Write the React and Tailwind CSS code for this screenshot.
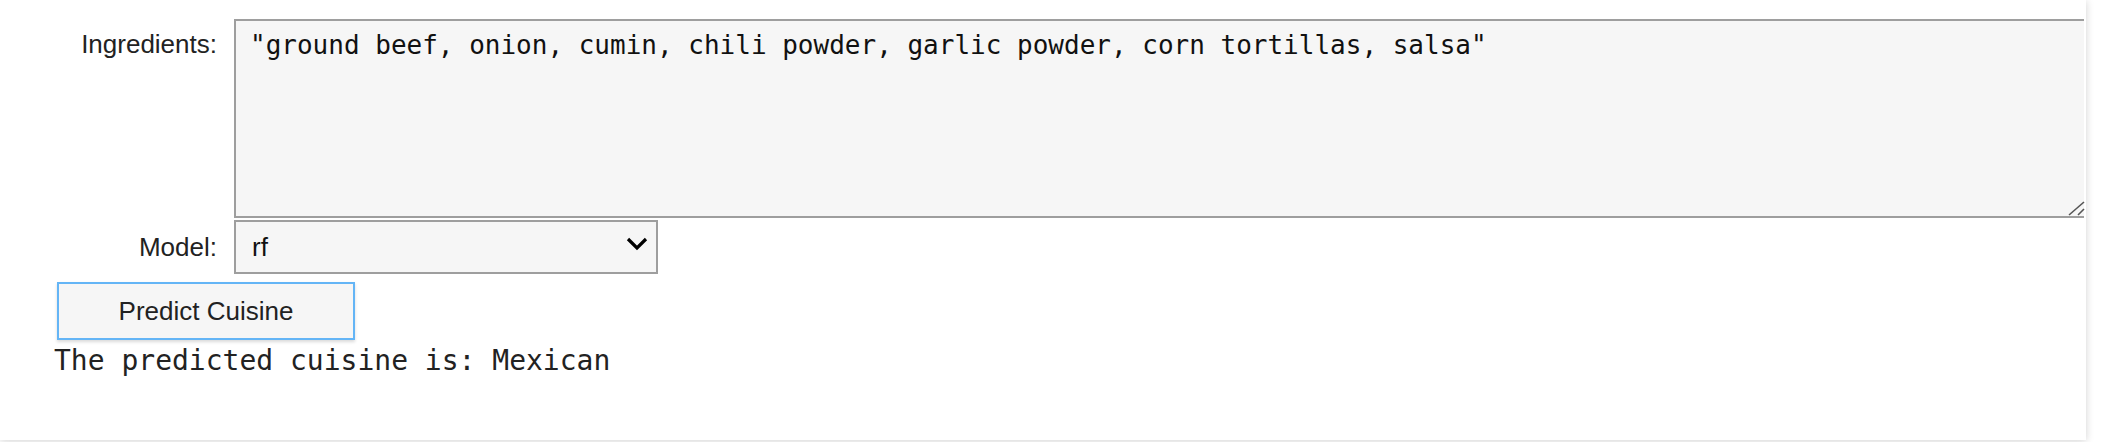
import React from 'react';

const ingredients = '"ground beef, onion, cumin, chili powder, garlic powder, corn tortillas, salsa"';

const Label = ({ children, className = '' }) => (
  <div
    className={`w-[160px] shrink-0 text-right text-[26px] leading-normal text-[#222] font-['Liberation_Sans',Arial,sans-serif] ${className}`}
  >
    {children}
  </div>
);

const Chevron = () => (
  <svg width="22" height="14" viewBox="0 0 22 14" className="block">
    <polyline points="2,2 11,11 20,2" fill="none" stroke="#000" strokeWidth="3.2" />
  </svg>
);

export default function App() {
  return (
    <div className="w-[2118px] h-[442px] bg-white overflow-hidden">
      <div className="relative w-[2086px] h-[440px] bg-white shadow-[0_1px_8px_rgba(0,0,0,0.18)]">
        <div className="w-[2084px] h-full overflow-hidden pt-[19px] pl-[57px]">
          {/* ingredients */}
          <div className="flex items-start">
            <Label className="pt-[6px]">Ingredients:</Label>
            <textarea
              readOnly
              value={ingredients}
              className="ml-[17px] w-[1900px] h-[199px] shrink-0 resize-none border-2 border-[#9e9e9e] bg-[#f6f6f6] pt-[5px] pl-[14px] text-[26px] leading-normal text-[#111] outline-none font-['DejaVu_Sans_Mono',monospace]"
            />
          </div>

          {/* model */}
          <div className="mt-[2px] flex items-center">
            <Label>Model:</Label>
            <div className="relative ml-[17px] w-[424px] h-[54px]">
              <select
                defaultValue="rf"
                className="w-full h-full appearance-none border-2 border-[#9e9e9e] bg-[#f6f6f6] pl-[16px] text-[26px] text-[#111] outline-none font-['Liberation_Sans',Arial,sans-serif]"
              >
                <option value="rf">rf</option>
              </select>
              <div className="pointer-events-none absolute right-[10px] top-[17px]">
                <Chevron />
              </div>
            </div>
          </div>

          <button className="mt-[8px] flex w-[298px] h-[58px] items-center justify-center border-2 border-[#64b5f6] bg-[#f6f6f6] text-[26px] text-[#222] shadow-[0_2px_3px_rgba(0,0,0,0.15)] font-['Liberation_Sans',Arial,sans-serif]">
            Predict Cuisine
          </button>

          <div className="-ml-[3px] mt-0 text-[28px] leading-normal text-[#222] whitespace-pre font-['DejaVu_Sans_Mono',monospace]">
            The predicted cuisine is: Mexican
          </div>
        </div>

        {/* textarea resize grip */}
        <svg
          width="20"
          height="20"
          viewBox="0 0 20 20"
          className="pointer-events-none absolute left-[2066px] top-[199px]"
        >
          <line x1="3" y1="16" x2="18" y2="3" stroke="#555" strokeWidth="1.6" />
          <line x1="12" y1="16" x2="18" y2="10" stroke="#555" strokeWidth="1.6" />
        </svg>
      </div>
    </div>
  );
}
